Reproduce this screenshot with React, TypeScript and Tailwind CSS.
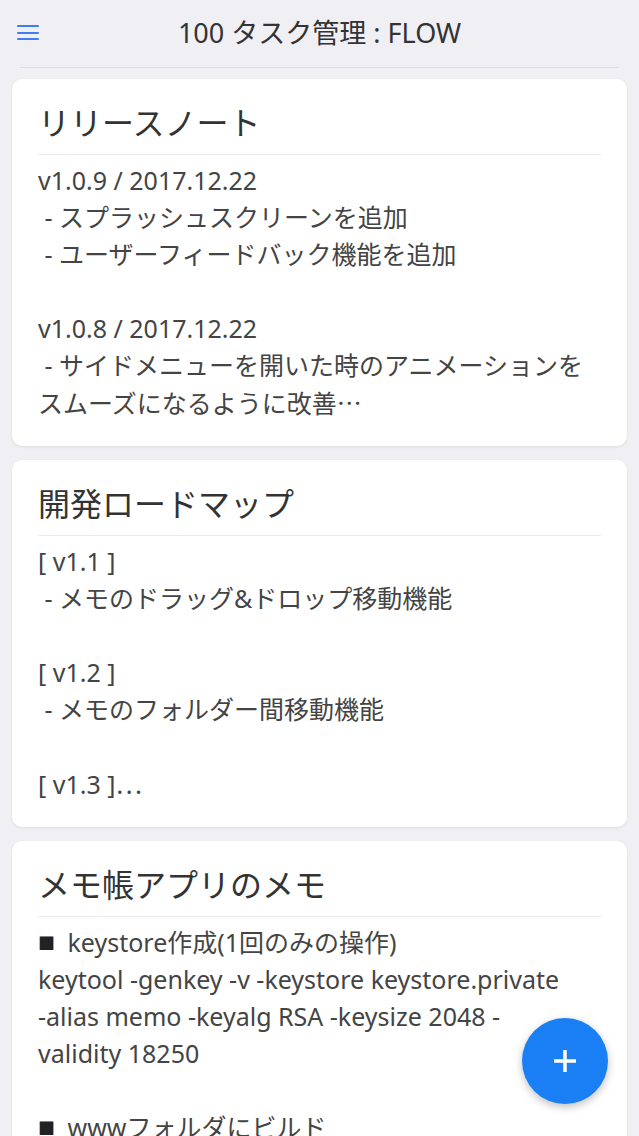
import React from 'react';

// Home screen: note cards preview
const NOTES: { title: string; lines: string[] }[] = [
    {
        title: 'リリースノート',
        lines: [
            'v1.0.9 / 2017.12.22',
            ' - スプラッシュスクリーンを追加',
            ' - ユーザーフィードバック機能を追加',
            '',
            'v1.0.8 / 2017.12.22',
            ' - サイドメニューを開いた時のアニメーションを',
            'スムーズになるように改善…',
        ],
    },
    {
        title: '開発ロードマップ',
        lines: [
            '[ v1.1 ]',
            ' - メモのドラッグ&ドロップ移動機能',
            '',
            '[ v1.2 ]',
            ' - メモのフォルダー間移動機能',
            '',
            '[ v1.3 ]…',
        ],
    },
    {
        title: 'メモ帳アプリのメモ',
        lines: [
            '■ keystore作成(1回のみの操作)',
            'keytool -genkey -v -keystore keystore.private',
            '-alias memo -keyalg RSA -keysize 2048 -',
            'validity 18250',
            '',
            '■ wwwフォルダにビルド',
        ],
    },
];

const CJK = { fontFamily: '"Noto Sans CJK JP", sans-serif' };

function Line({ text }: { text: string }) {
    // the bullet square renders smaller in the app font
    if (text.startsWith('■')) {
        return (
            <>
                <span className="text-[17px] align-[2px] mr-[6px] text-[#222]">■</span>
                {text.slice(1)}
            </>
        );
    }
    // truncated previews end with a centred (CJK) ellipsis
    if (text.endsWith('…')) {
        return (
            <>
                {text.slice(0, -1)}
                <span style={CJK}>…</span>
            </>
        );
    }
    return <>{text}</>;
}

function NoteCard({ title, lines }: { title: string; lines: string[] }) {
    return (
        <div className="bg-white rounded-[10px] shadow-[0_1px_3px_rgba(0,0,0,0.08)] px-[26px] pt-6 pb-[25px]">
            <h2 className="text-[32px] leading-[40px] text-[#333] font-normal mb-[11px]">{title}</h2>
            <div className="border-t border-[#ececef] pt-[7px]">
                {lines.map((line, i) => (
                    <div key={i} className="text-[25px] leading-[37px] h-[37px] text-[#444] whitespace-pre">
                        <Line text={line} />
                    </div>
                ))}
            </div>
        </div>
    );
}

export default function App() {
    return (
        <div
            className="relative h-[1136px] overflow-hidden bg-[#efeff4]"
            style={{ fontFamily: '"Noto Sans", "Noto Sans CJK JP", sans-serif' }}
        >
            {/* Header */}
            <header className="relative mx-[20px] h-[68px] border-b border-[#dcdce1] flex items-center justify-center">
                <button className="absolute left-[-3px] top-[25px] w-[22px] h-[15px] flex flex-col justify-between">
                    <span className="block h-[2px] w-[22px] bg-[#3d7ef0] rounded" />
                    <span className="block h-[2px] w-[22px] bg-[#3d7ef0] rounded" />
                    <span className="block h-[2px] w-[22px] bg-[#3d7ef0] rounded" />
                </button>
                <h1 className="text-[27px] text-[#333] font-normal">100 タスク管理 : FLOW</h1>
            </header>

            {/* Cards */}
            <main className="flex flex-col gap-[14px] mx-3 mt-[11px]">
                {NOTES.map((note, idx) => (
                    <NoteCard key={idx} title={note.title} lines={note.lines} />
                ))}
            </main>

            {/* FAB */}
            <button className="absolute right-[31px] bottom-[32px] w-[86px] h-[86px] rounded-full bg-[#1a7ff4] shadow-[0_3px_8px_rgba(0,0,0,0.25)] flex items-center justify-center">
                <svg width="26" height="26" viewBox="0 0 26 26">
                    <path d="M13 2v22M2 13h22" stroke="white" strokeWidth="3.5" />
                </svg>
            </button>
        </div>
    );
}
